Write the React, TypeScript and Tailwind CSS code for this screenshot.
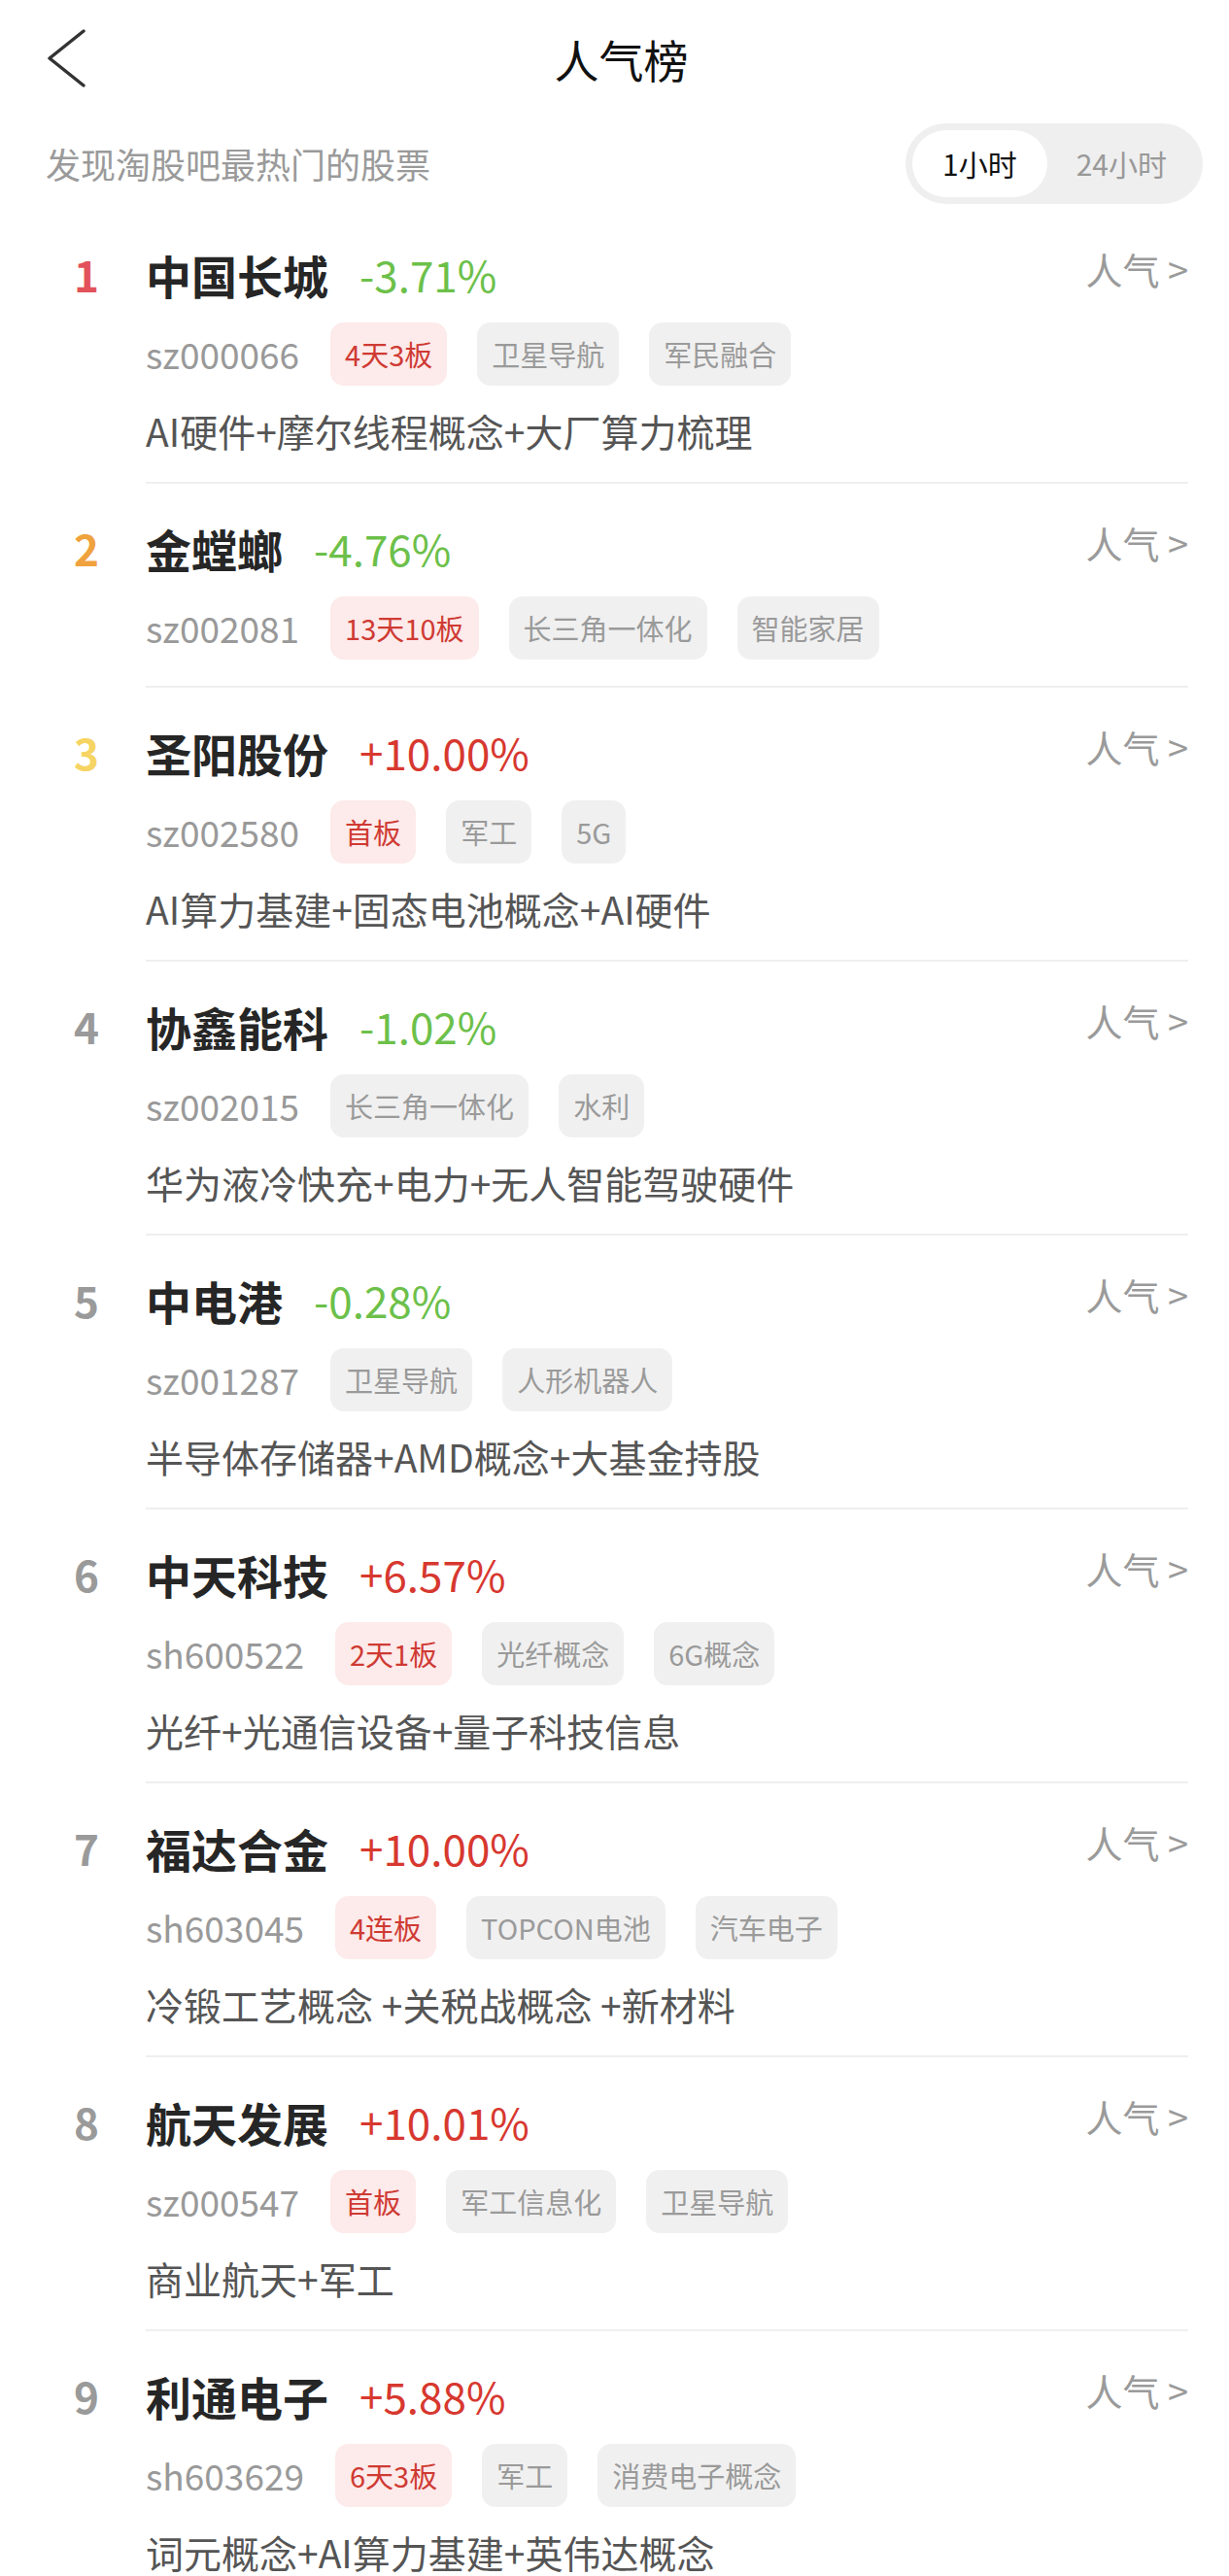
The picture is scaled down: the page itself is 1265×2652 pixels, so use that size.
import React from "react";

type Stock = {
  rank: number;
  name: string;
  change: string;
  code: string;
  hot?: string;
  tags: string[];
  concept?: string;
};

const stocks: Stock[] = [
  { rank: 1, name: "中国长城", change: "-3.71%", code: "sz000066", hot: "4天3板", tags: ["卫星导航", "军民融合"], concept: "AI硬件+摩尔线程概念+大厂算力梳理" },
  { rank: 2, name: "金螳螂", change: "-4.76%", code: "sz002081", hot: "13天10板", tags: ["长三角一体化", "智能家居"] },
  { rank: 3, name: "圣阳股份", change: "+10.00%", code: "sz002580", hot: "首板", tags: ["军工", "5G"], concept: "AI算力基建+固态电池概念+AI硬件" },
  { rank: 4, name: "协鑫能科", change: "-1.02%", code: "sz002015", tags: ["长三角一体化", "水利"], concept: "华为液冷快充+电力+无人智能驾驶硬件" },
  { rank: 5, name: "中电港", change: "-0.28%", code: "sz001287", tags: ["卫星导航", "人形机器人"], concept: "半导体存储器+AMD概念+大基金持股" },
  { rank: 6, name: "中天科技", change: "+6.57%", code: "sh600522", hot: "2天1板", tags: ["光纤概念", "6G概念"], concept: "光纤+光通信设备+量子科技信息" },
  { rank: 7, name: "福达合金", change: "+10.00%", code: "sh603045", hot: "4连板", tags: ["TOPCON电池", "汽车电子"], concept: "冷锻工艺概念 +关税战概念 +新材料" },
  { rank: 8, name: "航天发展", change: "+10.01%", code: "sz000547", hot: "首板", tags: ["军工信息化", "卫星导航"], concept: "商业航天+军工" },
  { rank: 9, name: "利通电子", change: "+5.88%", code: "sh603629", hot: "6天3板", tags: ["军工", "消费电子概念"], concept: "词元概念+AI算力基建+英伟达概念" },
];

function rankColor(rank: number) {
  if (rank === 1) return "text-[#e3525b]";
  if (rank === 2) return "text-[#efa23d]";
  if (rank === 3) return "text-[#f6d463]";
  return "text-[#9a9a9a]";
}

function StockRow({ s }: { s: Stock }) {
  const up = s.change.startsWith("+");
  return (
    <div className="flex">
      <div className="w-[86px] pt-[38px]">
        <div className={`w-[50px] h-[56px] flex items-center justify-center text-[44px] font-bold ${rankColor(s.rank)}`}>
          {s.rank}
        </div>
      </div>
      <div className="flex-1 pt-[38px] pb-[27px] border-b-2 border-[#efefef]">
        <div className="flex items-center justify-between h-[56px]">
          <div className="flex items-center gap-[32px]">
            <span className="text-[47px] font-bold text-[#262626] leading-none">{s.name}</span>
            <span className={`text-[44px] leading-none ${up ? "text-[#d7382f]" : "text-[#6cc04a]"}`}>{s.change}</span>
          </div>
          <span className="text-[38px] text-[#9a9a9a] leading-none -mt-[10px] whitespace-pre">人气 &gt;</span>
        </div>
        <div className="flex items-center gap-[32px] mt-[22px]">
          <span className="text-[37px] text-[#999999] leading-none">{s.code}</span>
          <div className="flex items-center gap-[31px]">
            {s.hot && (
              <span className="h-[65px] px-[15px] flex items-center rounded-[14px] bg-[#fdeaea] text-[#cf3a33] text-[29px]">
                {s.hot}
              </span>
            )}
            {s.tags.map((t) => (
              <span key={t} className="h-[65px] px-[15px] flex items-center rounded-[14px] bg-[#f0f0f0] text-[#9a9a9a] text-[29px]">
                {t}
              </span>
            ))}
          </div>
        </div>
        {s.concept && (
          <div className="mt-[20px] h-[52px] flex items-center text-[39px] text-[#555555]">{s.concept}</div>
        )}
      </div>
    </div>
  );
}

export default function App() {
  return (
    <div className="w-[1265px] min-h-[2652px] bg-white [font-family:'Noto_Sans_CJK_SC',sans-serif]">
      <div className="grid grid-cols-[1fr_auto_1fr] items-center h-[120px] px-[46px]">
        <svg width="44" height="60" viewBox="0 0 44 60" fill="none">
          <path d="M40 2 L5 30 L40 58" stroke="#333" strokeWidth="3.5" strokeLinecap="round" strokeLinejoin="round" />
        </svg>
        <h1 className="text-[46px] text-[#111] font-normal pl-[14px]">人气榜</h1>
        <div />
      </div>
      <div className="flex items-center justify-between h-[96px] pl-[47px] pr-[27px]">
        <span className="text-[36px] text-[#9a9a9a]">发现淘股吧最热门的股票</span>
        <div className="flex items-center h-[83px] p-[7px] rounded-full bg-[#efefef]">
          <span className="h-full px-[31px] flex items-center rounded-full bg-white text-[30px] text-[#111]">1小时</span>
          <span className="h-full px-[30px] flex items-center text-[30px] text-[#999]">24小时</span>
        </div>
      </div>
      <div className="pl-[64px] pr-[42px]">
        {stocks.map((s) => (
          <StockRow key={s.rank} s={s} />
        ))}
      </div>
    </div>
  );
}
